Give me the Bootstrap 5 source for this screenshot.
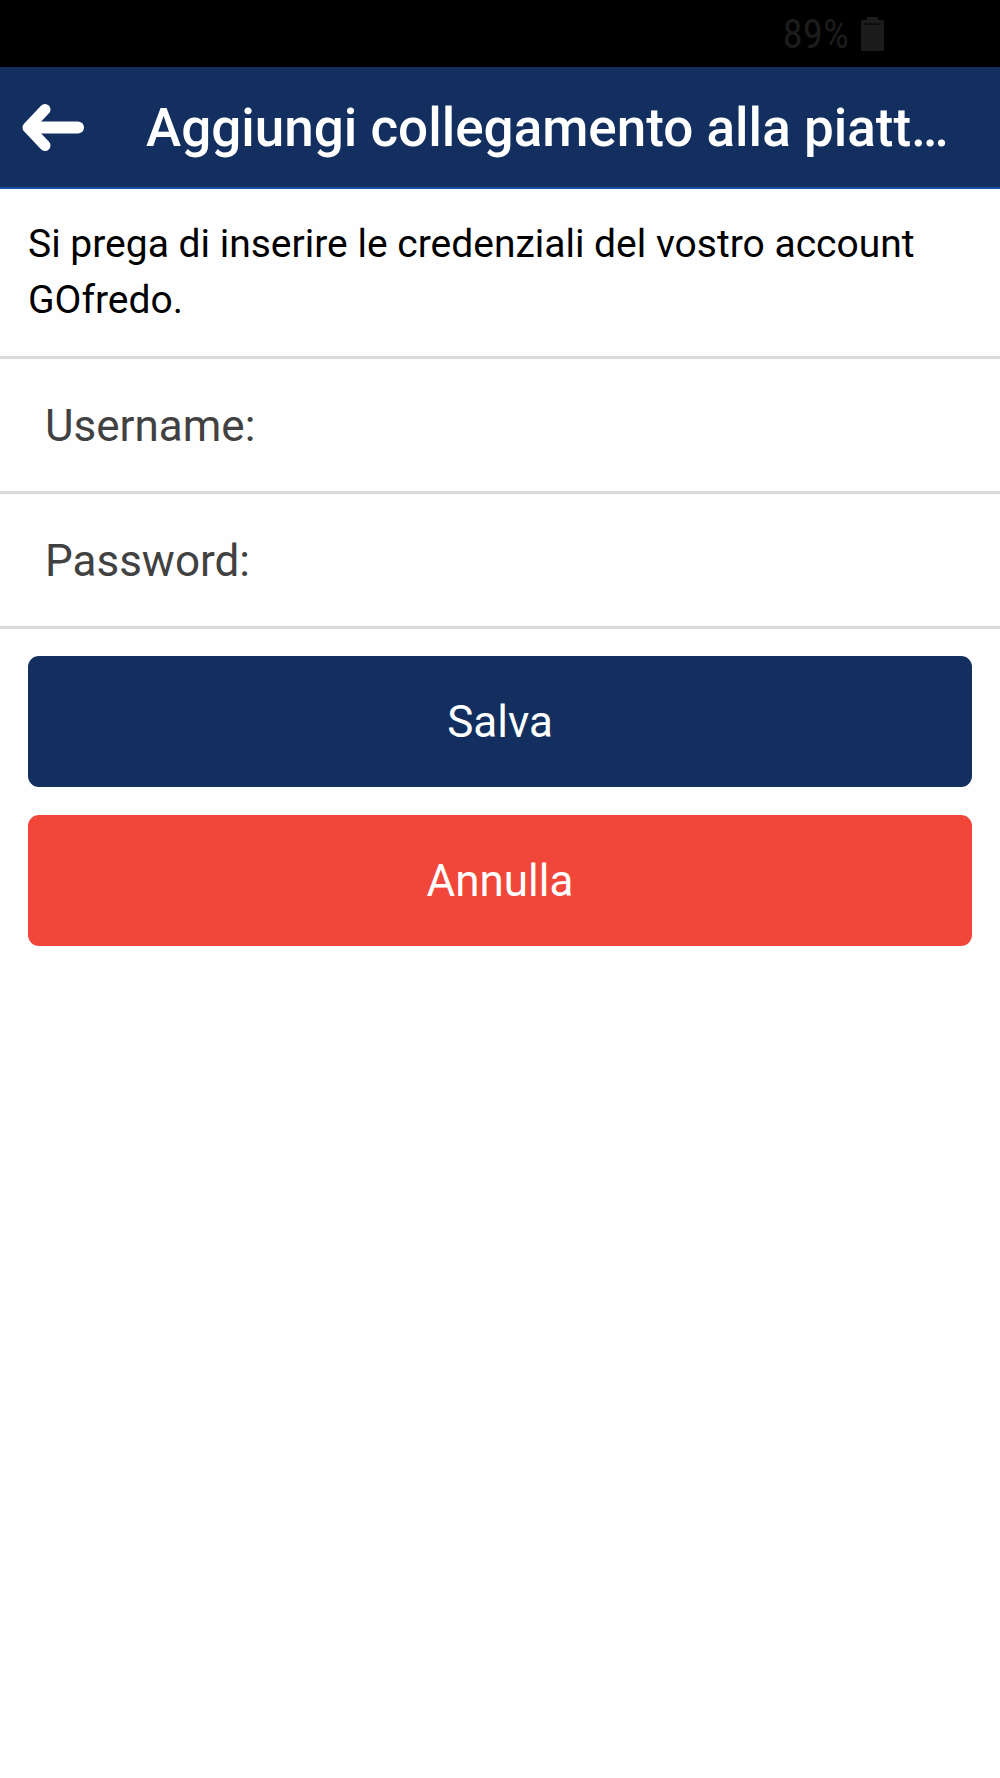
<!DOCTYPE html>
<html lang="it">
<head>
<meta charset="utf-8">
<meta name="viewport" content="width=device-width, initial-scale=1">
<title>Aggiungi collegamento alla piattaforma</title>
<link href="https://cdn.jsdelivr.net/npm/bootstrap@5.3.0/dist/css/bootstrap.min.css" rel="stylesheet">
<style>
  body { font-family: Roboto, "Liberation Sans", sans-serif; color: #000; background: #fefefe; }
  .status-bar { height: 67px; background: #000; color: #1c1c1c; padding-right: 116px; gap: 12px; font-size: 41px; line-height: 48px; }
  .status-level { font-family: "Roboto Condensed", Roboto, sans-serif; }
  .app-header { height: 122px; background: #122f60; border-bottom: 2px solid #1a4fae; padding: 0 24px 0 20px; }
  .back-btn { width: 126px; line-height: 0; }
  .app-title { font-size: 53px; line-height: 64px; font-weight: 500; color: #fff; padding-top: 2px; }
  .intro { font-size: 39px; line-height: 56px; padding: 27px 28px 28px; }
  .field-row { height: 135px; padding: 2px 28px 0 45px; font-size: 44px; border-bottom: 3px solid #dadada; }
  .field-list { border-top: 3px solid #dadada; }
  .field-row label { color: #414141; }
  .field-row input { font-size: 44px; }
  .actions { padding: 27px 28px; gap: 28px; }
  .action-btn { height: 131px; border: 0; border-radius: 11px; font-size: 44px; color: #fff; }
  .action-save, .action-save:hover { background: #122f60; color: #fff; }
  .action-cancel, .action-cancel:hover { background: #f0473a; color: #fff; }
</style>
<script src="https://cdn.jsdelivr.net/npm/bootstrap@5.3.0/dist/js/bootstrap.bundle.min.js" defer></script>
</head>
<body>
<div class="status-bar d-flex align-items-center justify-content-end">
  <span class="status-level">89%</span>
  <svg width="23" height="34" viewBox="0 0 23 34" fill="#1c1c1c" aria-hidden="true"><path d="M6 3V0h11v3h5q1 0 1 1v29q0 1-1 1H1q-1 0-1-1V4q0-1 1-1z"/><path d="M3 7h17" stroke="#000" stroke-width="1"/></svg>
</div>
<header class="app-header d-flex align-items-center">
  <button type="button" class="back-btn btn p-0 border-0 rounded-0 text-start flex-shrink-0" aria-label="Indietro">
    <svg width="66" height="50" viewBox="0 0 66 50" aria-hidden="true"><path d="M25 7.500L8 25.500L25 43.500" fill="none" stroke="#fff" stroke-width="11" stroke-linecap="round" stroke-linejoin="round"/><path d="M10 25.500H58" stroke="#fff" stroke-width="12" stroke-linecap="round"/><path d="M8 25.500L20 12V39Z" fill="#fff"/></svg>
  </button>
  <h1 class="app-title text-truncate mb-0">Aggiungi collegamento alla piatt…</h1>
</header>
<main>
  <p class="intro mb-0">Si prega di inserire le credenziali del vostro account GOfredo.</p>
  <form>
    <div class="field-list">
      <div class="field-row d-flex align-items-center gap-3">
        <label for="username">Username:</label>
        <input id="username" type="text" class="form-control border-0 shadow-none bg-transparent p-0" autocomplete="username">
      </div>
      <div class="field-row d-flex align-items-center gap-3">
        <label for="password">Password:</label>
        <input id="password" type="password" class="form-control border-0 shadow-none bg-transparent p-0" autocomplete="current-password">
      </div>
    </div>
    <div class="actions d-grid">
      <button type="submit" class="action-btn action-save btn">Salva</button>
      <button type="button" class="action-btn action-cancel btn">Annulla</button>
    </div>
  </form>
</main>
</body>
</html>
